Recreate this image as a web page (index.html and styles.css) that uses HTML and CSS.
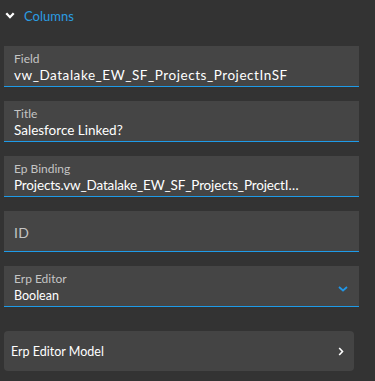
FILE: index.html
```html
<!DOCTYPE html>
<html lang="en">
<head>
  <meta charset="UTF-8" />
  <title>Columns</title>
  <link rel="stylesheet" href="styles.css">
</head>
<body>

  <div class="section-head">
    <svg class="head-chevron" width="10" height="7" viewBox="0 0 10 7"><path d="M1.3 1.3 L5 5.2 L8.7 1.3" fill="none" stroke="#fff" stroke-width="2.3"/></svg>
    <span class="head-title">Columns</span>
  </div>

  <div class="panel">
    <div class="field">
      <div class="field-label">Field</div>
      <div class="field-value wide">vw_Datalake_EW_SF_Projects_ProjectInSF</div>
    </div>

    <div class="field">
      <div class="field-label">Title</div>
      <div class="field-value">Salesforce Linked?</div>
    </div>

    <div class="field">
      <div class="field-label">Ep Binding</div>
      <div class="field-value tight">Projects.vw_Datalake_EW_SF_Projects_ProjectI…</div>
    </div>

    <div class="field field-empty">
      <div class="field-placeholder">ID</div>
    </div>

    <div class="field field-select">
      <div>
        <div class="field-label large">Erp Editor</div>
        <div class="field-value small">Boolean</div>
      </div>
      <svg class="select-chevron" width="10" height="6" viewBox="0 0 10 6"><path d="M1 1 L5 4.5 L9 1" fill="none" stroke="#2196e6" stroke-width="1.8"/></svg>
    </div>

    <div class="nav-row">
      <span>Erp Editor Model</span>
      <svg width="6" height="9" viewBox="0 0 6 9"><path d="M1.2 1 L4.5 4.5 L1.2 8" fill="none" stroke="#fff" stroke-width="1.6"/></svg>
    </div>
  </div>

</body>
</html>
```

FILE: styles.css
```css
body {
  margin: 0;
  background-color: #333333;
  font-family: Lato, "Noto Sans", sans-serif;
  color: #ffffff;
  width: 375px;
  height: 381px;
  overflow: hidden;
}

.section-head {
  display: flex;
  align-items: center;
  height: 31px;
  padding-left: 5px;
}

.head-chevron {
  margin-right: 9px;
}

.head-title {
  color: #2a9de2;
  font-size: 13px;
}

.panel {
  padding: 15px 16px 0 4px;
  display: flex;
  flex-direction: column;
  gap: 14px;
}

.field {
  background-color: #454545;
  border-bottom: 1px solid #1e9be8;
  height: 41px;
  box-sizing: border-box;
  padding: 6px 10px 0 10px;
}

.field-label {
  font-size: 12px;
  color: #c4c4c4;
  line-height: 14px;
}

.field-label.large {
  line-height: 16px;
  margin-top: -1px;
}

.field-value {
  font-size: 13.5px;
  line-height: 19px;
  color: #ffffff;
  white-space: nowrap;
}

.field-value.wide {
  letter-spacing: 0.55px;
}

.field-value.tight {
  letter-spacing: -0.15px;
}

.field-value.small {
  font-size: 12.5px;
  line-height: 17px;
}

.field-empty {
  display: flex;
  align-items: center;
  padding-top: 2px;
}

.field-placeholder {
  font-size: 14px;
  letter-spacing: 0.3px;
  color: #c4c4c4;
}

.field-select {
  display: flex;
  align-items: center;
  justify-content: space-between;
  padding-right: 11px;
}

.field-select > div {
  align-self: flex-start;
}

.nav-row {
  margin-top: 10px;
  margin-right: 5px;
  height: 40px;
  background-color: #444444;
  border-radius: 4px;
  display: flex;
  align-items: center;
  justify-content: space-between;
  padding: 0 10px 0 7px;
  font-size: 12.5px;
}
```
